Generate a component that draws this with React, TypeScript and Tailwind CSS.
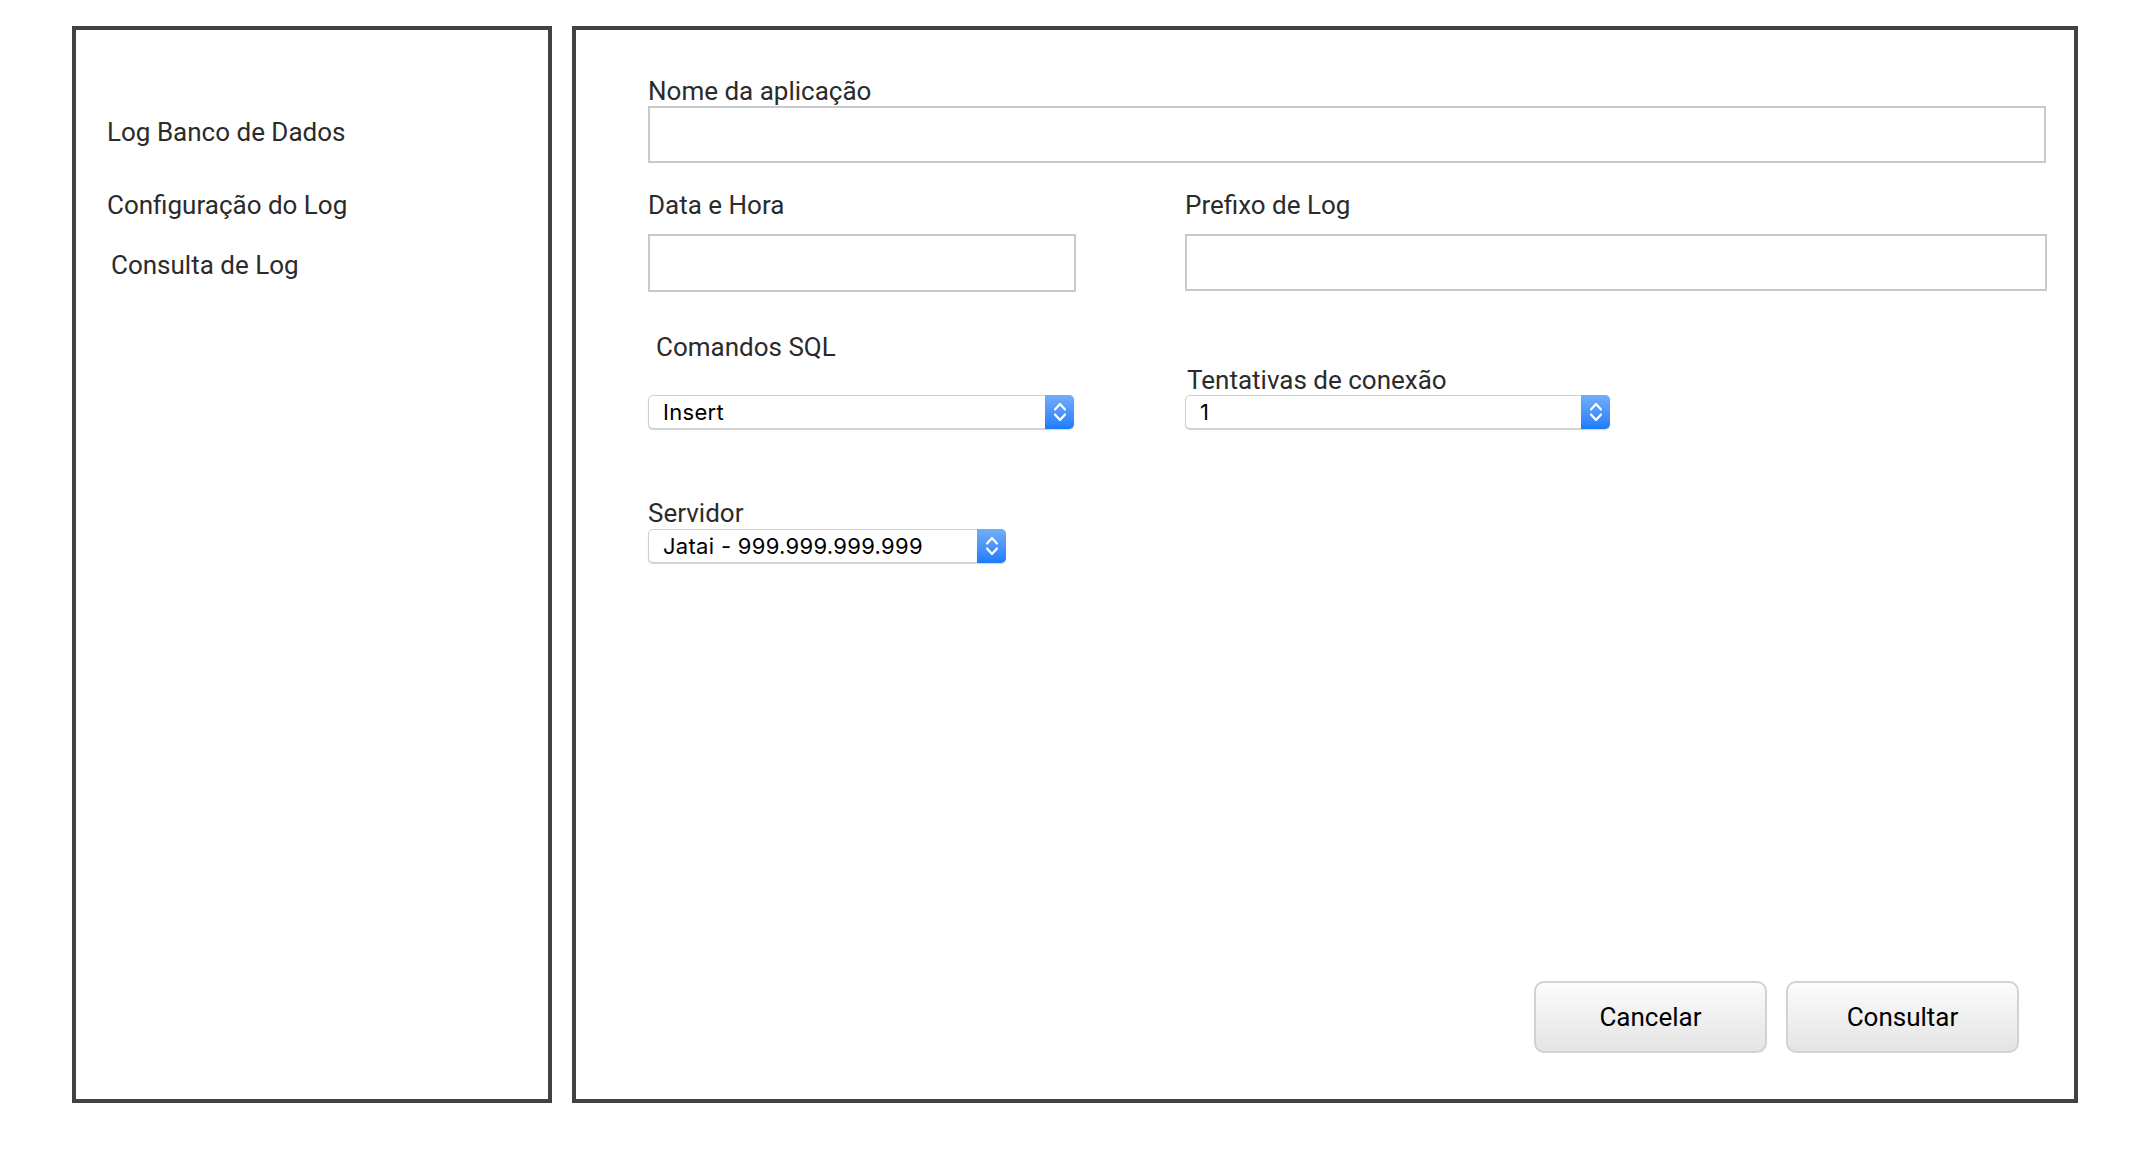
import React from "react";

function Chevrons() {
  return (
    <svg width="14" height="24" viewBox="0 0 14 24" fill="none">
      <path d="M2 9.5 L7 4 L12 9.5" stroke="white" strokeWidth="2.2" strokeLinecap="round" strokeLinejoin="round" />
      <path d="M2 14.5 L7 20 L12 14.5" stroke="white" strokeWidth="2.2" strokeLinecap="round" strokeLinejoin="round" />
    </svg>
  );
}

function Select({ value, width }: { value: string; width: string }) {
  return (
    <div
      className={`flex h-[34px] ${width} items-center rounded-[5px] border border-[#d0d0d0] bg-white shadow-[0_1px_1px_rgba(0,0,0,0.18)]`}
    >
      <span className="pl-[14px] font-[Inter,sans-serif] text-[22px] leading-none tracking-[0.3px] text-black">
        {value}
      </span>
      <div className="ml-auto -mr-px -my-px flex h-[34px] w-[29px] items-center justify-center rounded-r-[5px] bg-linear-to-b from-[#72adf9] to-[#1b7cfa]">
        <Chevrons />
      </div>
    </div>
  );
}

function Label({ children, className = "" }: { children: React.ReactNode; className?: string }) {
  return (
    <div className={`text-[26px] leading-[30px] text-[#2b2b2b] ${className}`}>{children}</div>
  );
}

function Button({ children }: { children: React.ReactNode }) {
  return (
    <button className="flex h-[72px] w-[233px] items-center justify-center rounded-[10px] border-2 border-[#d2d2d2] bg-linear-to-b from-[#fcfcfc] to-[#e4e4e4] text-[26px] text-black">
      {children}
    </button>
  );
}

export default function App() {
  return (
    <div className="flex h-[1152px] w-[2130px] gap-[20px] bg-white pl-[72px] pt-[26px] font-[Roboto,sans-serif]">
      <aside className="flex h-[1077px] w-[480px] flex-col border-4 border-[#424242] pl-[31px] pt-[87px]">
        <div className="text-[26px] leading-[30px] text-[#2b2b2b]">Log Banco de Dados</div>
        <div className="mt-[43px] text-[26px] leading-[30px] text-[#2b2b2b]">Configuração do Log</div>
        <div className="ml-[4px] mt-[30px] text-[26px] leading-[30px] text-[#2b2b2b]">Consulta de Log</div>
      </aside>

      <main className="flex h-[1077px] w-[1506px] flex-col border-4 border-[#424242] pb-[46px] pl-[72px] pr-[28px] pt-[46px]">
        <Label>Nome da aplicação</Label>
        <div className="h-[57px] w-[1398px] border-2 border-[#c9c9c9]" />

        <div className="mt-[27px] flex">
          <div className="flex w-[428px] flex-col">
            <Label>Data e Hora</Label>
            <div className="mt-[14px] h-[58px] w-[428px] border-2 border-[#c9c9c9]" />
          </div>
          <div className="ml-[109px] flex flex-col">
            <Label>Prefixo de Log</Label>
            <div className="mt-[14px] h-[57px] w-[862px] border-2 border-[#c9c9c9]" />
          </div>
        </div>

        <div className="mt-[40px] flex items-end">
          <div className="flex w-[428px] flex-col">
            <Label className="ml-[8px]">Comandos SQL</Label>
            <div className="mt-[33px]">
              <Select value="Insert" width="w-[426px]" />
            </div>
          </div>
          <div className="ml-[109px] flex flex-col">
            <Label className="ml-[2px]">Tentativas de conexão</Label>
            <Select value="1" width="w-[425px]" />
          </div>
        </div>

        <Label className="mt-[69px]">Servidor</Label>
        <div className="mt-[1px]">
          <Select value="Jatai - 999.999.999.999" width="w-[358px]" />
        </div>

        <div className="flex-1" />

        <div className="mr-[27px] flex justify-end gap-[19px]">
          <Button>Cancelar</Button>
          <Button>Consultar</Button>
        </div>
      </main>
    </div>
  );
}
